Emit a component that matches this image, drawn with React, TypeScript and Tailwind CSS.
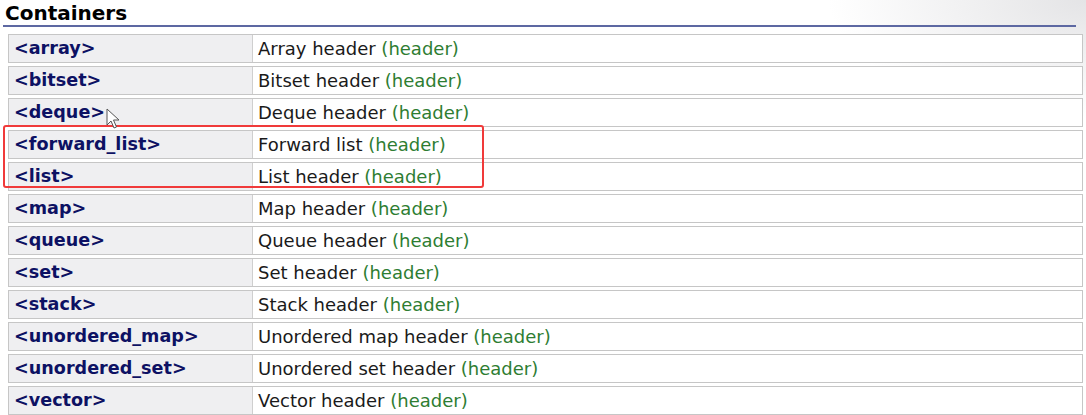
import React from 'react';

const rows: [string, string][] = [
  ['<array>', 'Array header'],
  ['<bitset>', 'Bitset header'],
  ['<deque>', 'Deque header'],
  ['<forward_list>', 'Forward list'],
  ['<list>', 'List header'],
  ['<map>', 'Map header'],
  ['<queue>', 'Queue header'],
  ['<set>', 'Set header'],
  ['<stack>', 'Stack header'],
  ['<unordered_map>', 'Unordered map header'],
  ['<unordered_set>', 'Unordered set header'],
  ['<vector>', 'Vector header'],
];

const Cursor = () => (
  <svg width="14" height="22" viewBox="0 0 14 22" className="absolute left-[106px] top-[108px]">
    <path d="M1 1 L1 17 L5 13 L8 20 L10.5 19 L7.5 12 L13 12 Z" fill="#fff" stroke="#555" strokeWidth="1" strokeLinejoin="round" />
  </svg>
);

export default function App() {
  return (
    <div className="relative w-[1086px] h-[415px] overflow-hidden bg-white font-['DejaVu_Sans',Verdana,sans-serif]">
      <div className="absolute right-0 top-0 w-[260px] h-[120px] bg-[radial-gradient(ellipse_at_top_right,#e4e4e6_0%,rgba(255,255,255,0)_70%)] pointer-events-none" />
      <div className="relative pl-[3px] pr-[10px]">
        <h2 className="text-[20px] leading-[24px] font-bold text-black pl-[2px] pt-[1px] border-b-2 border-[#5d68a2]">
          Containers
        </h2>
        <div className="mt-[7px] ml-[5px] mr-[-7px] flex flex-col gap-[3px]">
          {rows.map(([name, desc]) => (
            <div key={name} className="flex h-[29px] border border-[#c6c6c6]">
              <div className="w-[244px] shrink-0 bg-[#efeff1] border-r border-[#cfcfcf] pl-[5px] flex items-center">
                <span className="text-[17.6px] font-bold text-[#0d1163]">{name}</span>
              </div>
              <div className="flex-1 bg-white pl-[5px] flex items-center text-[18px] text-[#1a1a1a]">
                {desc}&nbsp;<span className="text-[#2e7d32]">(header)</span>
              </div>
            </div>
          ))}
        </div>
      </div>
      <div className="absolute left-[3px] top-[125px] w-[481px] h-[63px] border-2 border-[#f03a3a] rounded-[3px]" />
      <Cursor />
    </div>
  );
}
